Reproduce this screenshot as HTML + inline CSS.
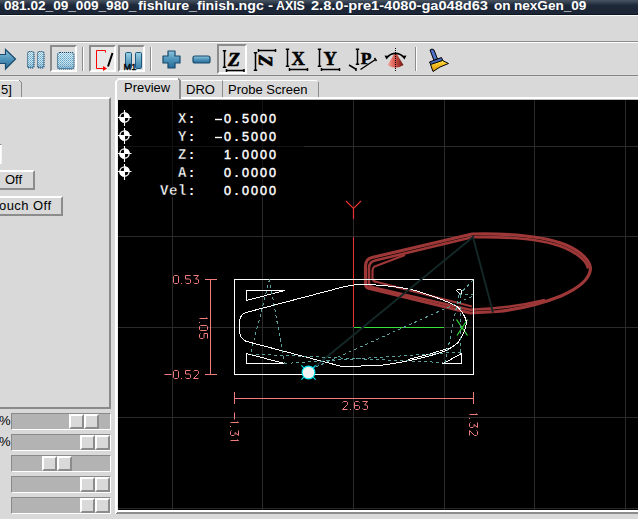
<!DOCTYPE html>
<html><head><meta charset="utf-8">
<style>
html,body{margin:0;padding:0;width:638px;height:519px;overflow:hidden;background:#d9d9d9;font-family:"Liberation Sans",sans-serif;position:relative}
.a{position:absolute;box-sizing:border-box}
#title{left:0;top:0;width:638px;height:15px;background:linear-gradient(to bottom,#485460 0px,#303c4c 3px,#1f2a3b 5px,#1c2636 7px,#1c2636 14px,#0d1623 14px,#0d1623 15px)}
.tt{top:-1px;height:15px;line-height:15px;color:#fff;font-weight:bold;font-size:12px;white-space:nowrap;transform-origin:0 0;transform:scaleX(1.182)}
.hl{left:0;width:638px;height:1px}
.sunk{border-top:2px solid #8c8c8c;border-left:2px solid #8c8c8c;border-right:2px solid #fff;border-bottom:2px solid #fff}
.raise{border-top:2px solid #fff;border-left:2px solid #fff;border-right:2px solid #8c8c8c;border-bottom:2px solid #8c8c8c}
.sep{width:2px;border-left:1px solid #8c8c8c;border-right:1px solid #fff}
.trough{left:11px;width:100px;height:17px;background:#b3b3b3;border-top:1px solid #8a8a8a;border-left:1px solid #8a8a8a;border-bottom:1px solid #fff;border-right:1px solid #fff}
.hd{width:15px;height:15px;background:#d9d9d9}
.txt{font-size:13px;color:#000;white-space:nowrap}
</style></head><body>
<div class="a" id="title"></div>
<div class="a tt" style="left:4.40px;transform:scaleX(1.133)">081.02_09_009_980_</div><div class="a tt" style="left:137.60px;transform:scaleX(1.179)">fishlure_finish.ngc</div><div class="a tt" style="left:267.80px;transform:scaleX(1.275)">-</div><div class="a tt" style="left:276.40px;transform:scaleX(1.029)">AXIS</div><div class="a tt" style="left:311.40px;transform:scaleX(1.217)">2.8.0-pre1-4080-ga048d63</div><div class="a tt" style="left:493.60px;transform:scaleX(1.13)">on</div><div class="a tt" style="left:514.17px;transform:scaleX(1.130)">nexGen_09</div>
<div class="a hl" style="top:15px;background:#fafafa"></div>
<div class="a hl" style="top:41px;background:#8c8c8c"></div>
<div class="a hl" style="top:42px;background:#fff"></div>
<div class="a hl" style="top:74px;background:#dedede"></div>
<div class="a hl" style="top:75px;background:#848484"></div>
<div class="a hl" style="top:76px;background:#dedede"></div>

<!-- toolbar buttons -->
<div class="a sunk" style="left:50px;top:45px;width:27px;height:27px;background:#dcdcdc"></div>
<div class="a sep" style="left:82px;top:47px;height:24px"></div>
<div class="a sunk" style="left:89px;top:45px;width:27px;height:27px;background:#e8e8e8"></div>
<div class="a sunk" style="left:118px;top:45px;width:27px;height:27px;background:#dcdcdc"></div>
<div class="a sep" style="left:150px;top:47px;height:24px"></div>
<div class="a sunk" style="left:217px;top:44px;width:30px;height:30px;background:#dcdcdc"></div>
<div class="a sep" style="left:415px;top:47px;height:24px"></div>
<svg class="a" style="left:0;top:0" width="460" height="78" viewBox="0 0 460 78">
<defs>
<pattern id="chk" width="2" height="2" patternUnits="userSpaceOnUse"><rect width="2" height="2" fill="#d2ecf4"/><rect width="1" height="1" fill="#5c9cc2"/><rect x="1" y="1" width="1" height="1" fill="#7ab4d2"/></pattern>
<linearGradient id="bl" x1="0" y1="0" x2="0" y2="1"><stop offset="0" stop-color="#8cc4dc"/><stop offset="0.5" stop-color="#4f94bb"/><stop offset="1" stop-color="#256a98"/></linearGradient>
<linearGradient id="shade" x1="0" y1="0" x2="0" y2="1"><stop offset="0" stop-color="#fff" stop-opacity="0.25"/><stop offset="0.4" stop-color="#fff" stop-opacity="0"/><stop offset="1" stop-color="#1a5a8a" stop-opacity="0.35"/></linearGradient>
<linearGradient id="barv" x1="0" y1="0" x2="0" y2="1"><stop offset="0" stop-color="#9ad0e4"/><stop offset="1" stop-color="#3a7eaa"/></linearGradient>
<linearGradient id="bar" x1="0" y1="0" x2="1" y2="0"><stop offset="0" stop-color="#3f84ae"/><stop offset="0.4" stop-color="#8cc6dc"/><stop offset="1" stop-color="#2a6e9a"/></linearGradient>
<linearGradient id="cone" x1="0" y1="0" x2="1" y2="0"><stop offset="0" stop-color="#f4a8a0"/><stop offset="0.45" stop-color="#d8584c"/><stop offset="1" stop-color="#6a1410"/></linearGradient>
<linearGradient id="brs" x1="0" y1="0" x2="0" y2="1"><stop offset="0" stop-color="#ffe040"/><stop offset="1" stop-color="#e09000"/></linearGradient>
</defs>
<path d="M-2,54.5 H5.5 V49.5 L15.5,59 L5.5,69 V63.5 H-2 Z" fill="url(#bl)" stroke="#174a6c" stroke-width="1.2"/>
<rect x="27.5" y="51.5" width="6.5" height="16.5" rx="1.8" fill="url(#chk)"/><rect x="27.5" y="51.5" width="6.5" height="16.5" rx="1.8" fill="url(#shade)" stroke="#0c4068" stroke-width="1.1" stroke-dasharray="1.1 0.9"/>
<rect x="37.5" y="51.5" width="6.5" height="16.5" rx="1.8" fill="url(#chk)"/><rect x="37.5" y="51.5" width="6.5" height="16.5" rx="1.8" fill="url(#shade)" stroke="#0c4068" stroke-width="1.1" stroke-dasharray="1.1 0.9"/>
<rect x="57.5" y="52.5" width="16.5" height="16.5" rx="2.5" fill="url(#chk)"/><rect x="57.5" y="52.5" width="16.5" height="16.5" rx="2.5" fill="url(#shade)" stroke="#0c4068" stroke-width="1.1" stroke-dasharray="1.1 0.9"/>
<path d="M105.5,52.5 V50.5 H96.5 V68.5 H103.5" fill="none" stroke="#ff0000" stroke-width="1"/>
<path d="M103,66 L107,68.5 L103,71 Z" fill="#ff0000"/>
<path d="M112.5,53 L108,66.5" stroke="#000" stroke-width="2"/>
<rect x="125.5" y="52.5" width="6" height="16" rx="1.2" fill="url(#barv)" stroke="#1e5a80" stroke-width="1"/>
<rect x="135.5" y="52.5" width="6" height="16" rx="1.2" fill="url(#barv)" stroke="#1e5a80" stroke-width="1"/>
<text x="123.6" y="69.6" font-family="Liberation Sans" font-size="9.6" fill="#000" stroke="#000" stroke-width="0.35" textLength="12.8" lengthAdjust="spacingAndGlyphs">M1</text>
<path d="M168,51 H175 V56 H180 V63 H175 V68 H168 V63 H163 V56 H168 Z" fill="url(#bl)" stroke="#174a6c" stroke-width="1.2" stroke-linejoin="round"/>
<rect x="193" y="56" width="17" height="7" rx="2" fill="url(#bl)" stroke="#174a6c" stroke-width="1.2"/>
<g stroke="#000" stroke-width="1.5" fill="none">
<path d="M224.5,50.5 V67.5 M222.8,50.8 H226.2 M222.8,67.2 H226.2 M226.5,70.5 H244 M226.5,69 V72 M244,69 V72"/>
<path d="M255.5,52.5 V70.5 M253.8,52.8 H257.2 M253.8,70.2 H257.2 M258.5,50.5 H275.5 M258.5,49 V52 M275.5,49 V52"/>
<path d="M287.5,49 V66.5 M285.8,49.3 H289.2 M285.8,66.2 H289.2 M289.5,69.5 H307.5 M289.5,68 V71 M307.5,68 V71"/>
<path d="M319.5,49 V66.5 M317.8,49.3 H321.2 M317.8,66.2 H321.2 M321.5,69.5 H339.5 M321.5,68 V71 M339.5,68 V71"/>
<path d="M357.5,49 V64.5 M355.8,49.3 H359.2 M355.8,64.2 H359.2 M349,65 L356.5,69.5 M360.5,69.5 L375.5,59.5 M356,68 V71 M374.5,58 L376.5,61"/>
</g>
<text x="228" y="66" font-family="Liberation Serif" font-weight="bold" font-style="italic" font-size="19.5" stroke="#000" stroke-width="0.7">Z</text>
<text x="0" y="6.3" text-anchor="middle" font-family="Liberation Serif" font-weight="bold" font-style="italic" font-size="18" stroke="#000" stroke-width="0.7" transform="translate(265.7,60.7) rotate(90)">Z</text>
<text x="291.5" y="65" font-family="Liberation Serif" font-weight="bold" font-size="18.5" stroke="#000" stroke-width="0.5">X</text>
<text x="323.5" y="65" font-family="Liberation Serif" font-weight="bold" font-size="18.5" stroke="#000" stroke-width="0.5">Y</text>
<text x="360.8" y="63.6" font-family="Liberation Serif" font-weight="bold" font-size="17.5" stroke="#000" stroke-width="0.5">P</text>
<path d="M395.5,52 L387.5,65 Q395.5,70.5 403.5,65 Z" fill="url(#cone)"/>
<path d="M387,57 Q395.5,49.5 404,57" fill="none" stroke="#000" stroke-width="1.5"/>
<path d="M384.5,55.5 L386.5,59.5 L389.5,56 Z M406.5,55.5 L404.5,59.5 L401.5,56 Z" fill="#000"/>
<path d="M395.5,48 V72" stroke="#000" stroke-width="1" stroke-dasharray="1 1"/>
<path d="M430,50 Q432,48 434,50 L437.5,59 L434,60.5 Z" fill="#4f72c8" stroke="#000" stroke-width="1"/>
<path d="M429.5,62 L441.5,57.5 L443,61 L431,65 Z" fill="#4868b8" stroke="#000" stroke-width="1"/>
<path d="M430.5,64.5 L442.5,60.5 L448.5,63.5 L440,67 L433,71.5 Z" fill="url(#brs)" stroke="#000" stroke-width="1"/>
</svg>

<!-- left panel -->
<div class="a" style="left:-4px;top:80px;width:26px;height:17px;border-top:1px solid #fff;border-right:1px solid #8c8c8c"></div>
<div class="a" style="left:19px;top:80px;width:3px;height:3px;background:linear-gradient(45deg,#d9d9d9 45%,#8c8c8c 50%,#d9d9d9 60%)"></div>
<div class="a txt" style="left:1px;top:82px">5]</div>
<div class="a" style="left:-4px;top:97px;width:115px;height:312px;border-top:2px solid #fff;border-right:2px solid #8a8a8a;border-bottom:2px solid #8a8a8a"></div>
<div class="a" style="left:-2px;top:144px;width:4px;height:20px;border-top:1px solid #8a8a8a;border-right:1px solid #f4f4f4;background:#fff"></div>
<div class="a raise" style="left:-4px;top:170px;width:39px;height:20px"></div>
<div class="a txt" style="left:5px;top:172px">Off</div>
<div class="a raise" style="left:-4px;top:196px;width:67px;height:20px"></div>
<div class="a txt" style="left:-1px;top:198px;letter-spacing:0.45px">ouch Off</div>
<div class="a txt" style="left:-1px;top:413px">%</div>
<div class="a txt" style="left:-1px;top:434px">%</div>
<div class="a trough" style="top:413px"></div>
<div class="a raise hd" style="left:69px;top:414px"></div><div class="a raise hd" style="left:84px;top:414px"></div>
<div class="a trough" style="top:434px"></div>
<div class="a raise hd" style="left:80px;top:435px"></div><div class="a raise hd" style="left:95px;top:435px"></div>
<div class="a trough" style="top:455px"></div>
<div class="a raise hd" style="left:42px;top:456px"></div><div class="a raise hd" style="left:57px;top:456px"></div>
<div class="a trough" style="top:476px"></div>
<div class="a raise hd" style="left:80px;top:477px"></div><div class="a raise hd" style="left:95px;top:477px"></div>
<div class="a trough" style="top:497px"></div>
<div class="a raise hd" style="left:80px;top:498px"></div><div class="a raise hd" style="left:95px;top:498px"></div>

<!-- tabs -->
<div class="a" style="left:181px;top:80px;width:42px;height:17px;border-top:1px solid #fff;border-right:1px solid #8c8c8c"></div>
<div class="a txt" style="left:186px;top:82px">DRO</div>
<div class="a" style="left:223px;top:80px;width:96px;height:17px;border-top:1px solid #fff;border-right:1px solid #8c8c8c"></div>
<div class="a" style="left:317px;top:80px;width:2px;height:2px;background:#d9d9d9"></div>
<div class="a txt" style="left:228px;top:82px">Probe Screen</div>
<div class="a" style="left:181px;top:97px;width:457px;height:2px;background:#fff"></div>
<div class="a" style="left:115px;top:78px;width:66px;height:22px;border-top:2px solid #fff;border-left:2px solid #fff;border-right:2px solid #8c8c8c;background:#d9d9d9"></div>
<div class="a" style="left:115px;top:78px;width:4px;height:4px;background:linear-gradient(135deg,#d9d9d9 0,#d9d9d9 40%,#fff 40%,#fff 75%,transparent 75%)"></div>
<div class="a" style="left:178px;top:78px;width:3px;height:3px;background:linear-gradient(225deg,#d9d9d9 0,#d9d9d9 45%,#8c8c8c 45%,#8c8c8c 80%,transparent 80%)"></div>
<div class="a txt" style="left:124px;top:80px">Preview</div>
<!-- notebook frame -->
<div class="a" style="left:115px;top:98px;width:2px;height:416px;background:#fff"></div>
<div class="a" style="left:117px;top:99px;width:1px;height:412px;background:#ececec"></div>
<div class="a" style="left:117px;top:99px;width:64px;height:1px;background:#d9d9d9"></div><div class="a" style="left:181px;top:99px;width:457px;height:1px;background:#bdbdbd"></div>
<div class="a" style="left:117px;top:510px;width:521px;height:2px;background:#fff"></div>
<div class="a" style="left:117px;top:512px;width:521px;height:2px;background:#8c8c8c"></div>
<div class="a" style="left:115px;top:512px;width:3px;height:2px;background:linear-gradient(135deg,#fff 50%,#8c8c8c 50%)"></div>
<svg class="a" style="left:118px;top:100px" width="520" height="410" viewBox="118 100 520 410">
<rect x="118" y="100" width="520" height="410" fill="#000"/>
<path d="M172.5,100 V510 M262.5,100 V510 M353.5,100 V510 M444.5,100 V510 M534.5,100 V510 M625.5,100 V510 M118,146.5 H638 M118,236.5 H638 M118,327.5 H638 M118,417.5 H638 M118,508.5 H638" stroke="#2a2a2a" stroke-width="1" shape-rendering="crispEdges"/>
<rect x="118" y="100" width="186" height="97" fill="#000" fill-opacity="0.57"/>
<g><circle cx="124.5" cy="117.5" r="4.6" fill="#000" stroke="#fff" stroke-width="1.3"/><path d="M124.5,117.5 V112.3 A5.2,5.2 0 0 1 129.7,117.5 Z M124.5,117.5 V122.7 A5.2,5.2 0 0 1 119.3,117.5 Z" fill="#fff"/><path d="M117.5,117.5 H131.5 M124.5,110.0 V126.0" stroke="#fff" stroke-width="1.1"/></g>
<g><circle cx="124.5" cy="135.5" r="4.6" fill="#000" stroke="#fff" stroke-width="1.3"/><path d="M124.5,135.5 V130.3 A5.2,5.2 0 0 1 129.7,135.5 Z M124.5,135.5 V140.7 A5.2,5.2 0 0 1 119.3,135.5 Z" fill="#fff"/><path d="M117.5,135.5 H131.5 M124.5,128.0 V144.0" stroke="#fff" stroke-width="1.1"/></g>
<g><circle cx="124.5" cy="153.5" r="4.6" fill="#000" stroke="#fff" stroke-width="1.3"/><path d="M124.5,153.5 V148.3 A5.2,5.2 0 0 1 129.7,153.5 Z M124.5,153.5 V158.7 A5.2,5.2 0 0 1 119.3,153.5 Z" fill="#fff"/><path d="M117.5,153.5 H131.5 M124.5,146.0 V162.0" stroke="#fff" stroke-width="1.1"/></g>
<g><circle cx="124.5" cy="171.5" r="4.6" fill="#000" stroke="#fff" stroke-width="1.3"/><path d="M124.5,171.5 V166.3 A5.2,5.2 0 0 1 129.7,171.5 Z M124.5,171.5 V176.7 A5.2,5.2 0 0 1 119.3,171.5 Z" fill="#fff"/><path d="M117.5,171.5 H131.5 M124.5,164.0 V180.0" stroke="#fff" stroke-width="1.1"/></g>
<g><text x="182.2" y="123" text-anchor="middle" font-family="Liberation Mono" font-weight="bold" font-size="14" fill="#fff" stroke="#000" stroke-width="0.4">X</text><text x="191.5" y="123" text-anchor="middle" font-family="Liberation Mono" font-weight="bold" font-size="13.5" fill="#fff">:</text><path d="M215.0,119.5 H222.0" stroke="#fff" stroke-width="1.4"/><text x="227.5" y="123" text-anchor="middle" font-family="Liberation Sans" font-size="12.6" fill="#fff" stroke="#fff" stroke-width="0.45">0</text><text x="236.5" y="123" text-anchor="middle" font-family="Liberation Mono" font-weight="bold" font-size="13.5" fill="#fff">.</text><text x="245.5" y="123" text-anchor="middle" font-family="Liberation Sans" font-size="12.6" fill="#fff" stroke="#fff" stroke-width="0.45">5</text><text x="254.5" y="123" text-anchor="middle" font-family="Liberation Sans" font-size="12.6" fill="#fff" stroke="#fff" stroke-width="0.45">0</text><text x="263.5" y="123" text-anchor="middle" font-family="Liberation Sans" font-size="12.6" fill="#fff" stroke="#fff" stroke-width="0.45">0</text><text x="272.5" y="123" text-anchor="middle" font-family="Liberation Sans" font-size="12.6" fill="#fff" stroke="#fff" stroke-width="0.45">0</text><text x="182.2" y="141" text-anchor="middle" font-family="Liberation Mono" font-weight="bold" font-size="14" fill="#fff" stroke="#000" stroke-width="0.4">Y</text><text x="191.5" y="141" text-anchor="middle" font-family="Liberation Mono" font-weight="bold" font-size="13.5" fill="#fff">:</text><path d="M215.0,137.5 H222.0" stroke="#fff" stroke-width="1.4"/><text x="227.5" y="141" text-anchor="middle" font-family="Liberation Sans" font-size="12.6" fill="#fff" stroke="#fff" stroke-width="0.45">0</text><text x="236.5" y="141" text-anchor="middle" font-family="Liberation Mono" font-weight="bold" font-size="13.5" fill="#fff">.</text><text x="245.5" y="141" text-anchor="middle" font-family="Liberation Sans" font-size="12.6" fill="#fff" stroke="#fff" stroke-width="0.45">5</text><text x="254.5" y="141" text-anchor="middle" font-family="Liberation Sans" font-size="12.6" fill="#fff" stroke="#fff" stroke-width="0.45">0</text><text x="263.5" y="141" text-anchor="middle" font-family="Liberation Sans" font-size="12.6" fill="#fff" stroke="#fff" stroke-width="0.45">0</text><text x="272.5" y="141" text-anchor="middle" font-family="Liberation Sans" font-size="12.6" fill="#fff" stroke="#fff" stroke-width="0.45">0</text><text x="182.2" y="159" text-anchor="middle" font-family="Liberation Mono" font-weight="bold" font-size="14" fill="#fff" stroke="#000" stroke-width="0.4">Z</text><text x="191.5" y="159" text-anchor="middle" font-family="Liberation Mono" font-weight="bold" font-size="13.5" fill="#fff">:</text><text x="227.5" y="159" text-anchor="middle" font-family="Liberation Sans" font-size="12.6" fill="#fff" stroke="#fff" stroke-width="0.45">1</text><text x="236.5" y="159" text-anchor="middle" font-family="Liberation Mono" font-weight="bold" font-size="13.5" fill="#fff">.</text><text x="245.5" y="159" text-anchor="middle" font-family="Liberation Sans" font-size="12.6" fill="#fff" stroke="#fff" stroke-width="0.45">0</text><text x="254.5" y="159" text-anchor="middle" font-family="Liberation Sans" font-size="12.6" fill="#fff" stroke="#fff" stroke-width="0.45">0</text><text x="263.5" y="159" text-anchor="middle" font-family="Liberation Sans" font-size="12.6" fill="#fff" stroke="#fff" stroke-width="0.45">0</text><text x="272.5" y="159" text-anchor="middle" font-family="Liberation Sans" font-size="12.6" fill="#fff" stroke="#fff" stroke-width="0.45">0</text><text x="182.2" y="177" text-anchor="middle" font-family="Liberation Mono" font-weight="bold" font-size="14" fill="#fff" stroke="#000" stroke-width="0.4">A</text><text x="191.5" y="177" text-anchor="middle" font-family="Liberation Mono" font-weight="bold" font-size="13.5" fill="#fff">:</text><text x="227.5" y="177" text-anchor="middle" font-family="Liberation Sans" font-size="12.6" fill="#fff" stroke="#fff" stroke-width="0.45">0</text><text x="236.5" y="177" text-anchor="middle" font-family="Liberation Mono" font-weight="bold" font-size="13.5" fill="#fff">.</text><text x="245.5" y="177" text-anchor="middle" font-family="Liberation Sans" font-size="12.6" fill="#fff" stroke="#fff" stroke-width="0.45">0</text><text x="254.5" y="177" text-anchor="middle" font-family="Liberation Sans" font-size="12.6" fill="#fff" stroke="#fff" stroke-width="0.45">0</text><text x="263.5" y="177" text-anchor="middle" font-family="Liberation Sans" font-size="12.6" fill="#fff" stroke="#fff" stroke-width="0.45">0</text><text x="272.5" y="177" text-anchor="middle" font-family="Liberation Sans" font-size="12.6" fill="#fff" stroke="#fff" stroke-width="0.45">0</text><text x="164.2" y="195" text-anchor="middle" font-family="Liberation Mono" font-weight="bold" font-size="14" fill="#fff" stroke="#000" stroke-width="0.4">V</text><text x="173.2" y="195" text-anchor="middle" font-family="Liberation Mono" font-weight="bold" font-size="14" fill="#fff" stroke="#000" stroke-width="0.4">e</text><text x="182.2" y="195" text-anchor="middle" font-family="Liberation Mono" font-weight="bold" font-size="14" fill="#fff" stroke="#000" stroke-width="0.4">l</text><text x="191.5" y="195" text-anchor="middle" font-family="Liberation Mono" font-weight="bold" font-size="13.5" fill="#fff">:</text><text x="227.5" y="195" text-anchor="middle" font-family="Liberation Sans" font-size="12.6" fill="#fff" stroke="#fff" stroke-width="0.45">0</text><text x="236.5" y="195" text-anchor="middle" font-family="Liberation Mono" font-weight="bold" font-size="13.5" fill="#fff">.</text><text x="245.5" y="195" text-anchor="middle" font-family="Liberation Sans" font-size="12.6" fill="#fff" stroke="#fff" stroke-width="0.45">0</text><text x="254.5" y="195" text-anchor="middle" font-family="Liberation Sans" font-size="12.6" fill="#fff" stroke="#fff" stroke-width="0.45">0</text><text x="263.5" y="195" text-anchor="middle" font-family="Liberation Sans" font-size="12.6" fill="#fff" stroke="#fff" stroke-width="0.45">0</text><text x="272.5" y="195" text-anchor="middle" font-family="Liberation Sans" font-size="12.6" fill="#fff" stroke="#fff" stroke-width="0.45">0</text></g>
<path d="M353.5,237 V327" stroke="#e83030" stroke-width="1" shape-rendering="crispEdges"/>
<path d="M353.5,208.5 V219 M346,201 L353.5,208.5 L361,201" stroke="#e83030" stroke-width="1.2" fill="none"/>
<path d="M354,327.5 H444" stroke="#3ce03c" stroke-width="1" shape-rendering="crispEdges"/>
<path d="M456.5,319.5 L467.5,335.5 M467.5,319.5 L457,335.5" stroke="#3ce03c" stroke-width="1.2"/>
<path d="M210.5,279 V375 M205,279.5 H217 M205,374.5 H217 M234,398.5 H474 M234.5,392 V404 M473.5,392 V404" stroke="#f07c7c" stroke-width="1" shape-rendering="crispEdges" fill="none"/>
<g stroke="#f07c7c" stroke-width="1" fill="none"><path transform="translate(173.5,275.5)" d="M0,1 L1,0 H4 L5,1 V7 L4,8 H1 L0,7 Z"/><rect x="181" y="283" width="1" height="1" fill="#f07c7c" stroke="none"/><path transform="translate(185.5,275.5)" d="M5,0 H0 V3.5 H4 L5,4.5 V7 L4,8 H1 L0,7"/><path transform="translate(193.5,275.5)" d="M0,0 H5 L2,3.5 H4 L5,4.5 V7 L4,8 H1 L0,7"/><path transform="translate(164.5,370.5)" d="M0,4 H7"/><path transform="translate(173.5,370.5)" d="M0,1 L1,0 H4 L5,1 V7 L4,8 H1 L0,7 Z"/><rect x="181" y="378" width="1" height="1" fill="#f07c7c" stroke="none"/><path transform="translate(185.5,370.5)" d="M5,0 H0 V3.5 H4 L5,4.5 V7 L4,8 H1 L0,7"/><path transform="translate(193.5,370.5)" d="M0,1 L1,0 H4 L5,1 V3 L0,8 H5"/><path transform="translate(342.5,401.5)" d="M0,1 L1,0 H4 L5,1 V3 L0,8 H5"/><rect x="350" y="409" width="1" height="1" fill="#f07c7c" stroke="none"/><path transform="translate(354.5,401.5)" d="M5,1 L4,0 H1 L0,1 V7 L1,8 H4 L5,7 V5 L4,4 H0"/><path transform="translate(362.5,401.5)" d="M0,0 H5 L2,3.5 H4 L5,4.5 V7 L4,8 H1 L0,7"/><path transform="matrix(0,1,-1,0,207.5,316.5)" d="M1,1 L2,0 V8"/><rect x="199" y="322" width="1" height="1" fill="#f07c7c" stroke="none"/><path transform="matrix(0,1,-1,0,207.5,325.5)" d="M0,1 L1,0 H4 L5,1 V7 L4,8 H1 L0,7 Z"/><path transform="matrix(0,1,-1,0,207.5,333.5)" d="M5,0 H0 V3.5 H4 L5,4.5 V7 L4,8 H1 L0,7"/><path transform="matrix(0,1,-1,0,238.5,412.5)" d="M0,4 H7"/><path transform="matrix(0,1,-1,0,238.5,420.5)" d="M1,1 L2,0 V8"/><rect x="230" y="426" width="1" height="1" fill="#f07c7c" stroke="none"/><path transform="matrix(0,1,-1,0,238.5,430.5)" d="M0,0 H5 L2,3.5 H4 L5,4.5 V7 L4,8 H1 L0,7"/><path transform="matrix(0,1,-1,0,238.5,438.5)" d="M1,1 L2,0 V8"/><path transform="matrix(0,1,-1,0,477.5,412.5)" d="M1,1 L2,0 V8"/><rect x="469" y="418" width="1" height="1" fill="#f07c7c" stroke="none"/><path transform="matrix(0,1,-1,0,477.5,422.5)" d="M0,0 H5 L2,3.5 H4 L5,4.5 V7 L4,8 H1 L0,7"/><path transform="matrix(0,1,-1,0,477.5,430.5)" d="M0,1 L1,0 H4 L5,1 V3 L0,8 H5"/></g>
<path d="M365.5,284 V266 Q365.5,259 372,257.5 L472,234 C512,233.2 545,236.5 566,245 C582,252 590,261 590.5,268.5 C590,279 579,288 561,296 C541,304 516,309.5 497,311.5 L470,313 L369.5,288.5 Q365.5,287.5 365.5,284 Z" fill="none" stroke="#9e3737" stroke-width="3.2"/>
<path d="M373.5,287.5 Q369,286.5 369,283 V268 Q369,262 375,260.5 L472,237.3 C512,236.5 545,239.5 565,248 C579,254 587,262 588,268.5 M373.5,287.5 L470,309.8 C495,309 520,306 545,300" fill="none" stroke="#9e3737" stroke-width="2.6"/>
<path d="M405,255 L376,266 Q372.5,267 372.5,271 V278.5 Q373,281.5 377,282 L472,306.5" fill="none" stroke="#9e3737" stroke-width="2.2"/>
<rect x="234.5" y="279.5" width="239" height="95" fill="none" stroke="#fff" stroke-width="1" shape-rendering="crispEdges"/>
<path d="M246.5,290.5 H284.5 L246.5,300.5 Z M246.5,353.5 L284.5,363.5 H246.5 Z M461.5,353.5 V363.5 H443.5 Z" fill="none" stroke="#fff" stroke-width="1" shape-rendering="crispEdges"/>
<path d="M456.5,290.5 Q457.5,289 460.5,289.5 Q462.5,291 462,294 L460,294 Z" fill="none" stroke="#fff" stroke-width="1" shape-rendering="crispEdges"/>
<path d="M246,312.5 L345,286.5 Q354,284.5 363,284.5 Q392,285 415,290.5 Q440,298 456,305.8 Q464,312 466.5,322 Q466,332 458,342.5 Q452,348 445,351 Q420,360 380,365.5 L342,366.5 L246,341.3 Q240,338 239.5,332 V321 Q240.5,314 246,312.5 Z" fill="none" stroke="#fff" stroke-width="1" shape-rendering="crispEdges"/>
<path d="M408,359.5 Q430,354.5 449,348" fill="none" stroke="#fff" stroke-width="1" shape-rendering="crispEdges"/>
<path d="M312,369 L473,237 L493,312.5" fill="none" stroke="#142828" stroke-width="1.9"/>
<path d="M269.5,279.5 L250.5,354 M269.5,279.5 L284.5,363.5 M250.5,354 L443,362.5 M284.5,363.5 L461.5,352 M316,367 L473,296 M459,295 L445,363 M460.5,295 V352 M459,294.5 H473 M473,280 L459,295" fill="none" stroke="#5a9e9e" stroke-width="1" stroke-dasharray="3 3" shape-rendering="crispEdges"/>
<circle cx="308.5" cy="372.5" r="6.4" fill="#f0f0f0" stroke="#00e8f0" stroke-width="1.1"/>
<path d="M303.8,367.8 L301.4,365.4 M313.2,367.8 L315.6,365.4 M303.8,377.2 L301.4,379.6 M313.2,377.2 L315.6,379.6" stroke="#00e8f0" stroke-width="1.2"/>
</svg>

</body></html>
